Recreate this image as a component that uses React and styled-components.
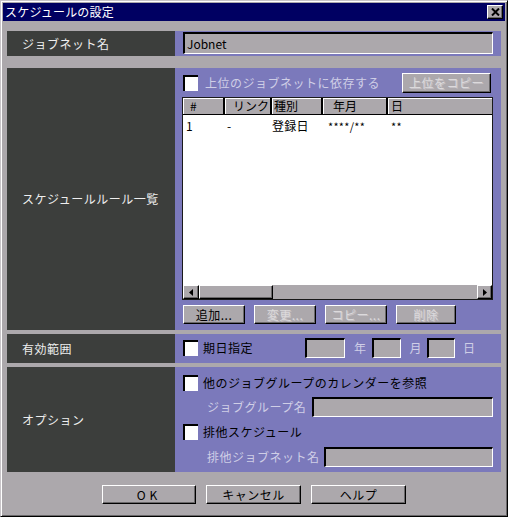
import React from "react";
import styled, { createGlobalStyle } from "styled-components";

const GREY = "#aca8ac";
const DARK = "#3c3e3c";
const PURPLE = "#7b79bb";
const DIS = "#cfcee6";

const Global = createGlobalStyle`
  html, body { margin: 0; padding: 0; background: ${GREY}; }
  * { box-sizing: border-box; }
  body { font-family: "Noto Sans CJK JP", "Noto Sans", sans-serif; font-size: 12px; }
`;

const Window = styled.div`
  width: 508px;
  height: 517px;
  background: ${GREY};
  border: 1px solid;
  border-color: #c8c4c8 #000 #000 #c8c4c8;
  box-shadow: inset 1px 1px #fff, inset -1px -1px #6a686a;
  padding: 2px;
  display: flex;
  flex-direction: column;
`;

const TitleBar = styled.div`
  height: 18px;
  background: #000062;
  display: flex;
  align-items: center;
  justify-content: space-between;
  padding: 0 2px 0 2px;
`;

const Title = styled.span`
  color: #fff;
  font-size: 12px;
  line-height: 18px;
  letter-spacing: 0.2px;
`;

const CloseBtn = styled.div`
  width: 16px;
  height: 14px;
  background: ${GREY};
  border: 1px solid;
  border-color: #fff #000 #000 #fff;
  box-shadow: inset -1px -1px #6a686a;
  display: flex;
  align-items: center;
  justify-content: center;
`;

const Body = styled.div`
  padding: 10px 4px 0;
  display: flex;
  flex-direction: column;
`;

const Section = styled.div`
  display: grid;
  grid-template-columns: 168px 1fr;
  height: ${(p) => p.$h}px;
  margin-top: ${(p) => p.$mt || 0}px;
`;

const Label = styled.div`
  background: ${DARK};
  color: #eeeeee;
  display: flex;
  align-items: center;
  padding-left: 15px;
  letter-spacing: 0.5px;
  line-height: 14px;
`;

const Panel = styled.div`
  background: ${PURPLE};
  padding: ${(p) => p.$pad};
  display: flex;
  flex-direction: column;
`;

const Input = styled.div`
  height: ${(p) => p.$h || 20}px;
  width: ${(p) => (p.$w ? `${p.$w}px` : "auto")};
  flex: ${(p) => (p.$w ? "none" : "1")};
  background: ${GREY};
  border-top: 2px solid #000;
  border-left: 2px solid #000;
  border-bottom: 1px solid #fff;
  border-right: 1px solid #fff;
  display: flex;
  align-items: center;
  padding-left: 2px;
  color: #000;
  font-size: 12px;
`;

const Row = styled.div`
  display: flex;
  align-items: center;
  height: ${(p) => p.$h}px;
  margin-top: ${(p) => p.$mt || 0}px;
  padding-left: ${(p) => p.$pl || 0}px;
`;

const Check = styled.div`
  width: 15px;
  height: 16px;
  flex: none;
  background: #fff;
  border-top: 2px solid #000;
  border-left: 2px solid #000;
  margin-left: ${(p) => p.$ml || 0}px;
`;

const Text = styled.span`
  color: ${(p) => (p.$dis ? DIS : "#000")};
  margin-left: ${(p) => p.$ml || 0}px;
  letter-spacing: 0.5px;
  line-height: 14px;
  white-space: nowrap;
  flex: none;
`;

const Button = styled.div`
  width: ${(p) => p.$w}px;
  height: ${(p) => p.$h || 19}px;
  flex: none;
  background: ${GREY};
  border: 1px solid;
  border-color: #fff #000 #000 #fff;
  box-shadow: inset -1px -1px #6a686a;
  display: flex;
  align-items: center;
  justify-content: center;
  color: ${(p) => (p.$dis ? "#dcdadc" : "#000")};
  text-shadow: ${(p) => (p.$dis ? "1px 1px 0 #c4c0c4" : "none")};
  letter-spacing: ${(p) => p.$ls || 0.5}px;
  margin-left: ${(p) => p.$ml || 0}px;
  line-height: 14px;
`;

const Table = styled.div`
  margin-top: 4px;
  height: 203px;
  border: 1px solid #1a1a1a;
  background: #fff;
  display: flex;
  flex-direction: column;
`;

const HeaderRow = styled.div`
  display: flex;
  height: 17px;
  border-bottom: 1px solid #000;
  background: ${GREY};
`;

const HeadCell = styled.div`
  width: ${(p) => (p.$w ? `${p.$w}px` : "auto")};
  flex: ${(p) => (p.$w ? "none" : "1")};
  padding-left: ${(p) => p.$pl}px;
  border-right: ${(p) => (p.$last ? "none" : "2px solid #000")};
  box-shadow: inset 1px 1px #fff;
  line-height: 16px;
  font-size: 12px;
  overflow: hidden;
  white-space: nowrap;
  color: #000;
`;

const TBody = styled.div`
  flex: 1;
  padding-top: 4px;
`;

const DataRow = styled.div`
  display: flex;
  height: 14px;
`;

const DataCell = styled.div`
  width: ${(p) => (p.$w ? `${p.$w}px` : "auto")};
  flex: ${(p) => (p.$w ? "none" : "1")};
  padding-left: ${(p) => p.$pl}px;
  line-height: 14px;
  font-size: ${(p) => p.$fs || 12}px;
  color: #000;
  white-space: nowrap;
  letter-spacing: 0.3px;
`;

const ScrollBar = styled.div`
  height: 14px;
  display: flex;
  background: #bcb8bc;
`;

const ScrollPart = styled.div`
  width: ${(p) => p.$w}px;
  height: 14px;
  flex: none;
  background: ${GREY};
  border: 1px solid;
  border-color: #fff #000 #000 #fff;
  box-shadow: inset -1px -1px #6a686a;
  display: flex;
  align-items: center;
  justify-content: center;
`;

const Track = styled.div`
  flex: 1;
  background: ${GREY};
`;

const ButtonRow = styled.div`
  display: flex;
  gap: 9px;
  margin-top: 5px;
  padding-left: 1px;
`;

const Footer = styled.div`
  display: flex;
  justify-content: center;
  gap: 10px;
  margin-top: 13px;
`;

const Arrow = ({ dir }) => (
  <svg width="4" height="7" viewBox="0 0 4 7">
    {dir === "left" ? (
      <path d="M4 0 L0 3.5 L4 7 Z" fill="#000" />
    ) : (
      <path d="M0 0 L4 3.5 L0 7 Z" fill="#000" />
    )}
  </svg>
);

export default function App() {
  return (
    <>
      <Global />
      <Window>
        <TitleBar>
          <Title>スケジュールの設定</Title>
          <CloseBtn>
            <svg width="9" height="8" viewBox="0 0 9 8">
              <path d="M1 0.5 L8 7.5 M8 0.5 L1 7.5" stroke="#000" strokeWidth="2" />
            </svg>
          </CloseBtn>
        </TitleBar>
        <Body>
          <Section $h={25}>
            <Label>ジョブネット名</Label>
            <Panel $pad="1px 8px 2px 8px">
              <Input $h={22}>Jobnet</Input>
            </Panel>
          </Section>

          <Section $h={262} $mt={12}>
            <Label>スケジュールルール一覧</Label>
            <Panel $pad="5px 8px 6px 7px">
              <Row $h={20}>
                <Check $ml={1} />
                <Text $dis $ml={7}>上位のジョブネットに依存する</Text>
                <Button $dis $w={89} $h={20} style={{ marginLeft: "auto", marginRight: 2 }}>
                  上位をコピー
                </Button>
              </Row>
              <Table>
                <HeaderRow>
                  <HeadCell $w={42} $pl={7}>#</HeadCell>
                  <HeadCell $w={47} $pl={8}>リンク</HeadCell>
                  <HeadCell $w={51} $pl={2}>種別</HeadCell>
                  <HeadCell $w={65} $pl={10}>年月</HeadCell>
                  <HeadCell $pl={3} $last>日</HeadCell>
                </HeaderRow>
                <TBody>
                  <DataRow>
                    <DataCell $w={42} $pl={3}>1</DataCell>
                    <DataCell $w={47} $pl={2}>-</DataCell>
                    <DataCell $w={51} $pl={0}>登録日</DataCell>
                    <DataCell $w={65} $pl={5} $fs={11}>****/**</DataCell>
                    <DataCell $pl={3} $fs={11}>**</DataCell>
                  </DataRow>
                </TBody>
                <ScrollBar>
                  <ScrollPart $w={16}>
                    <Arrow dir="left" />
                  </ScrollPart>
                  <ScrollPart $w={74} />
                  <Track />
                  <ScrollPart $w={15}>
                    <Arrow dir="right" />
                  </ScrollPart>
                </ScrollBar>
              </Table>
              <ButtonRow>
                <Button $w={62}>追加...</Button>
                <Button $w={62} $dis>変更...</Button>
                <Button $w={62} $dis>コピー...</Button>
                <Button $w={60} $dis>削除</Button>
              </ButtonRow>
            </Panel>
          </Section>

          <Section $h={29} $mt={4}>
            <Label>有効範囲</Label>
            <Panel $pad="4px 8px 5px 8px">
              <Row $h={20}>
                <Check />
                <Text $ml={5}>期日指定</Text>
                <Input $w={40} style={{ marginLeft: 52 }} />
                <Text $dis $ml={9}>年</Text>
                <Input $w={29} style={{ marginLeft: 5 }} />
                <Text $dis $ml={9}>月</Text>
                <Input $w={28} style={{ marginLeft: 5 }} />
                <Text $dis $ml={8}>日</Text>
              </Row>
            </Panel>
          </Section>

          <Section $h={105} $mt={4}>
            <Label>オプション</Label>
            <Panel $pad="8px 8px 5px 8px">
              <Row $h={16}>
                <Check />
                <Text $ml={5}>他のジョブグループのカレンダーを参照</Text>
              </Row>
              <Row $h={20} $mt={6} $pl={24}>
                <Text $dis>ジョブグループ名</Text>
                <Input style={{ marginLeft: 6 }} />
              </Row>
              <Row $h={16} $mt={7}>
                <Check />
                <Text $ml={5}>排他スケジュール</Text>
              </Row>
              <Row $h={20} $mt={7} $pl={24}>
                <Text $dis>排他ジョブネット名</Text>
                <Input style={{ marginLeft: 4 }} />
              </Row>
            </Panel>
          </Section>
        </Body>
        <Footer>
          <Button $w={94} $ls={4}>OK</Button>
          <Button $w={95}>キャンセル</Button>
          <Button $w={95}>ヘルプ</Button>
        </Footer>
      </Window>
    </>
  );
}
